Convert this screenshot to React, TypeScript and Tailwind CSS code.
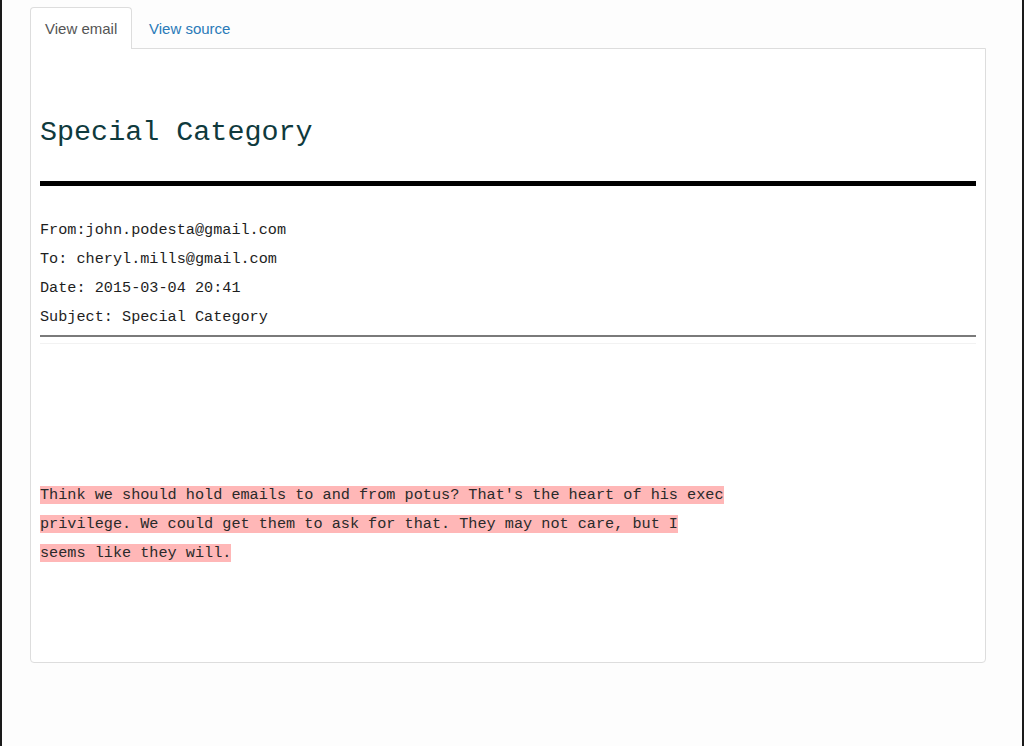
import React from "react";

export default function App() {
  return (
    <div className="w-[1024px] h-[746px] bg-[#fdfdfd] border-l-2 border-r-2 border-[#1a1a1a] overflow-hidden">
      <div className="pl-[28px] pr-[36px] pt-[7px]">
        <div className="flex h-[41px] items-stretch" style={{ fontFamily: '"Liberation Sans", Arial, sans-serif' }}>
          <div className="w-[102px] border border-[#ddd] border-b-0 rounded-t-[4px] bg-white flex items-center pl-[14px] pt-[2px] text-[15px] text-[#555] relative z-10 h-[42px]">
            View email
          </div>
          <div className="flex items-center pl-[17px] pt-[3px] text-[15px] text-[#2a7ab8]">View source</div>
        </div>
        <div className="h-[615px] border border-[#ddd] rounded-b-[4px] bg-white px-[9px]" style={{ fontFamily: '"Liberation Mono", "Courier New", monospace' }}>
          <div className="mt-[64px] h-[40px] leading-[40px] text-[28.4px] text-[#0f3a3d] whitespace-nowrap">
            Special Category
          </div>
          <div className="mt-[28px] h-[5px] bg-black" />
          <div className="mt-[30px] text-[15.2px] leading-[29px] text-[#1e1e1e] whitespace-nowrap">
            <div>From:john.podesta@gmail.com</div>
            <div>To: cheryl.mills@gmail.com</div>
            <div>Date: 2015-03-04 20:41</div>
            <div>Subject: Special Category</div>
          </div>
          <div className="mt-[3px] h-[2px] bg-[#7a7a7a]" />
          <div className="mt-[6px] h-px bg-[#f2f2f2]" />
          <div className="mt-[137px] text-[15.2px] leading-[29px] text-[#2a2a2a] whitespace-nowrap">
            <span className="bg-[#ffb7b7]">
              Think we should hold emails to and from potus? That's the heart of his exec
              <br />
              privilege. We could get them to ask for that. They may not care, but I
              <br />
              seems like they will.
            </span>
          </div>
        </div>
      </div>
    </div>
  );
}
